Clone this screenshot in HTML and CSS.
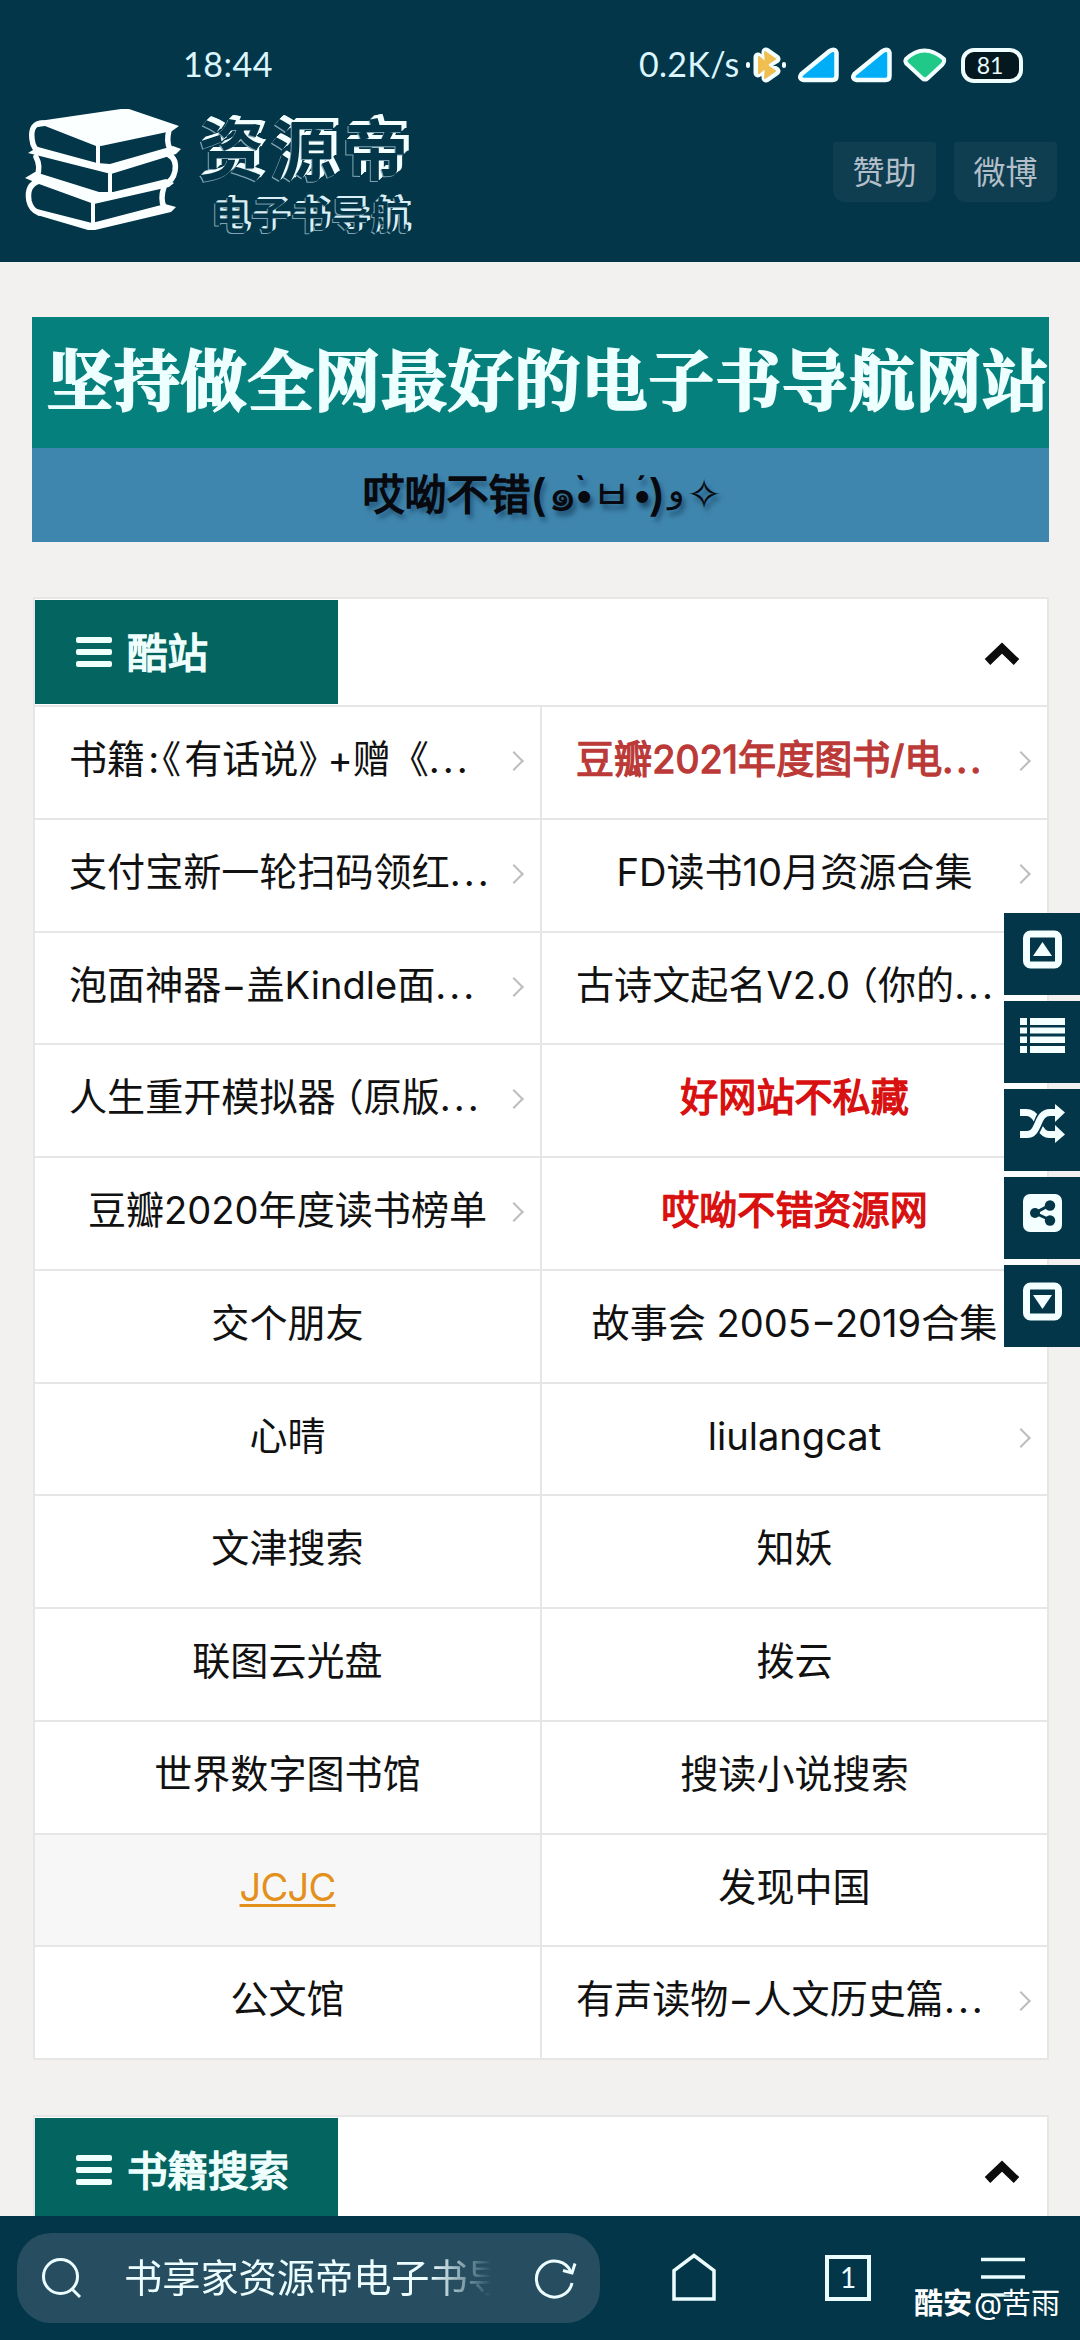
FILE: index.html
```html
<!DOCTYPE html>
<html lang="zh-CN">
<head>
<meta charset="utf-8">
<title>资源帝</title>
<link rel="stylesheet" href="styles.css">
</head>
<body>
<div class="screen">
  <header class="top">
    <div class="status">
      <span class="clock">18:44</span>
      <span class="speed">0.2K/s</span>
      <svg class="s-bt" viewBox="0 0 40 36" width="40" height="36"><g stroke="#f2feff" stroke-width="9" stroke-linejoin="round" stroke-linecap="round"><path d="M12 10l9 8-9 8z M20 5l10 7-10 6z M20 18l10 6-10 7z" fill="#f2feff"/></g><g fill="#f0bf50" stroke="#f0bf50" stroke-width="2" stroke-linejoin="round"><path d="M13 10l9 8-9 8z M19 5l10 7-9 6z M19 31l10-7-9-6z"/></g><rect x="0" y="15" width="4" height="6" rx="2" fill="#f2feff"/><rect x="36" y="15" width="4" height="6" rx="2" fill="#f2feff"/></svg>
      <svg class="s-sig" viewBox="0 0 41 34" width="41" height="34"><path d="M31 3.500Q37.500-.5 38.500 5V28Q38.500 32 34.500 32H6Q0 31 3.500 26Z" fill="#00adf7" stroke="#f2feff" stroke-width="4.500" stroke-linejoin="round"/></svg>
      <svg class="s-sig2" viewBox="0 0 41 34" width="41" height="34"><path d="M31 3.500Q37.500-.5 38.500 5V28Q38.500 32 34.500 32H6Q0 31 3.500 26Z" fill="#00adf7" stroke="#f2feff" stroke-width="4.500" stroke-linejoin="round"/></svg>
      <svg class="s-wifi" viewBox="0 0 44 34" width="44" height="34"><path d="M3 11Q21 -6 41 11Q42 14 39 17L25 30Q22 33 19 30L5 17Q1 14 3 11Z" fill="#20c987" stroke="#f2feff" stroke-width="4" stroke-linejoin="round"/></svg>
      <span class="battery">81</span>
    </div>
    <div class="brand-row">
      <svg class="books" viewBox="0 0 156 122" width="156" height="122">
        <g fill="none" stroke="#fbffff" stroke-width="5.500" stroke-linejoin="round" stroke-linecap="round">
          <path d="M18 14Q5 14 7 30Q8 40 15 43" /><path d="M144 21Q141 33 145 40"/>
          <path d="M11 48Q16 57 12 68"/><path d="M144 46Q152 50 150 62Q148 72 140 75"/>
          <path d="M14 72Q1 76 4 92Q6 101 14 104"/><path d="M139 78Q135 90 139 98"/>
          <path d="M73 36V54M85 65V84M68 94V117" stroke-width="4"/>
        </g>
        <g fill="#fbffff">
          <path d="M14 12L96 0H104L154 17L147 22L76 37H71L20 17L12 18Z"/>
          <path d="M3 44L13 38L72 54L85 55L148 37L156 40L151 45L86 65Z"/>
          <path d="M0 69L10 63L74 83L88 83L141 70L149 74L144 78L69 95L14 75Z"/>
          <path d="M8 99L67 114L140 95L151 98L146 103L70 121H63L12 106Z"/>
        </g>
      </svg>
      <div class="brand">
        <span class="brand-name">资源帝</span>
        <span class="brand-sub">电子书导航</span>
      </div>
      <nav class="links"><a>赞助</a><a>微博</a></nav>
    </div>
  </header>

  <main class="page">
    <section class="banner">
      <div class="banner-title">坚持做全网最好的电子书导航网站</div>
      <div class="banner-sub"><b class="lead">哎呦不错(</b><i class="thai">๑</i><i class="dot grave">•</i><i class="mouth">ㅂ</i><i class="dot acute">•</i><b class="close">)</b><i class="waw">و</i><i class="star">✧</i></div>
    </section>

    <section class="card">
      <div class="card-head">
        <h2 class="tab"><svg viewBox="0 0 36 30" width="36" height="30"><path d="M2 0h32a2 2 0 0 1 2 2v2a2 2 0 0 1-2 2H2a2 2 0 0 1-2-2V2a2 2 0 0 1 2-2zM2 12h32a2 2 0 0 1 2 2v2a2 2 0 0 1-2 2H2a2 2 0 0 1-2-2v-2a2 2 0 0 1 2-2zM2 24h32a2 2 0 0 1 2 2v2a2 2 0 0 1-2 2H2a2 2 0 0 1-2-2v-2a2 2 0 0 1 2-2z" fill="#effffd"/></svg><span>酷站</span></h2>
        <svg class="up" viewBox="0 0 36 24" width="36" height="24"><path d="M3.500 19L18 5L32.500 19" fill="none" stroke="#0c0c0c" stroke-width="8"/></svg>
      </div>
      <div class="grid">
        <a class="cell more start"><span>书籍<span class="colon">:</span><span class="lq">《</span>有话说<span class="rq">》</span>+赠《<em>...</em></span></a>
        <a class="cell more start crimson"><span>豆瓣2021年度图书/电<em>...</em></span></a>
        <a class="cell more start"><span>支付宝新一轮扫码领红<em>...</em></span></a>
        <a class="cell more"><span>FD读书10月资源合集</span></a>
        <a class="cell more start"><span>泡面神器−盖Kindle面<em>...</em></span></a>
        <a class="cell start"><span>古诗文起名V2.0<span class="paren">（</span>你的<em>...</em></span></a>
        <a class="cell more start"><span>人生重开模拟器<span class="paren">（</span>原版<em>...</em></span></a>
        <a class="cell red"><span>好网站不私藏</span></a>
        <a class="cell more"><span>豆瓣2020年度读书榜单</span></a>
        <a class="cell red"><span>哎呦不错资源网</span></a>
        <a class="cell"><span>交个朋友</span></a>
        <a class="cell"><span>故事会 2005−2019合集</span></a>
        <a class="cell"><span>心晴</span></a>
        <a class="cell more"><span>liulangcat</span></a>
        <a class="cell"><span>文津搜索</span></a>
        <a class="cell"><span>知妖</span></a>
        <a class="cell"><span>联图云光盘</span></a>
        <a class="cell"><span>拨云</span></a>
        <a class="cell"><span>世界数字图书馆</span></a>
        <a class="cell"><span>搜读小说搜索</span></a>
        <a class="cell active"><span>JCJC</span></a>
        <a class="cell"><span>发现中国</span></a>
        <a class="cell"><span>公文馆</span></a>
        <a class="cell more start"><span>有声读物−人文历史篇<em>...</em></span></a>
      </div>
    </section>

    <section class="card">
      <div class="card-head">
        <h2 class="tab"><svg viewBox="0 0 36 30" width="36" height="30"><path d="M2 0h32a2 2 0 0 1 2 2v2a2 2 0 0 1-2 2H2a2 2 0 0 1-2-2V2a2 2 0 0 1 2-2zM2 12h32a2 2 0 0 1 2 2v2a2 2 0 0 1-2 2H2a2 2 0 0 1-2-2v-2a2 2 0 0 1 2-2zM2 24h32a2 2 0 0 1 2 2v2a2 2 0 0 1-2 2H2a2 2 0 0 1-2-2v-2a2 2 0 0 1 2-2z" fill="#effffd"/></svg><span>书籍搜索</span></h2>
        <svg class="up" viewBox="0 0 36 24" width="36" height="24"><path d="M3.500 19L18 5L32.500 19" fill="none" stroke="#0c0c0c" stroke-width="8"/></svg>
      </div>
    </section>
  </main>

  <aside class="side">
    <a><svg viewBox="0 0 46 40" width="46" height="40"><rect x="6.500" y="4" width="32" height="31" rx="4" fill="none" stroke="#f4ffff" stroke-width="7"/><path d="M22.500 12L32 26H13Z" fill="#f4ffff"/></svg></a>
    <a><svg viewBox="0 0 46 40" width="46" height="40"><path d="M0 0h7v7H0zM10 0h35v7H10zM0 9.500h7v6H0zM10 9.500h35v6H10zM0 18.500h7v6.500H0zM10 18.500h35v6.500H10zM0 28h7v7H0zM10 28h35v7H10z" fill="#f4ffff"/></svg></a>
    <a><svg viewBox="0 0 46 40" width="46" height="40"><g fill="none" stroke="#f4ffff" stroke-width="7"><path d="M0 6.500H6Q13 6.500 17 14M20 22Q24 28.500 29 28.500H36"/></g><path d="M8 28.500C20 28.500 17 6.500 28 6.500" fill="none" stroke="#023648" stroke-width="10"/><path d="M0 28.500H7C20 28.500 16 6.500 30 6.500H36" fill="none" stroke="#f4ffff" stroke-width="7"/><path d="M35 -2L45 6.500L35 16ZM35 19L45 28.500L35 37Z" fill="#f4ffff"/></svg></a>
    <a><svg viewBox="0 0 46 40" width="46" height="40"><rect x="3" y="0" width="39" height="38" rx="7" fill="#f4ffff"/><path d="M30 11L15 19L30 26" fill="none" stroke="#023648" stroke-width="3"/><g fill="#023648"><circle cx="15" cy="19" r="5"/><circle cx="30" cy="11.500" r="5.200"/><circle cx="30" cy="26.500" r="5.200"/></g></svg></a>
    <a><svg viewBox="0 0 46 40" width="46" height="40"><rect x="6.500" y="4" width="32" height="31" rx="4" fill="none" stroke="#f4ffff" stroke-width="7"/><path d="M22.500 27L32 13H13Z" fill="#f4ffff"/></svg></a>
  </aside>

  <footer class="bar">
    <div class="search">
      <svg viewBox="0 0 40 40" width="40" height="40"><g fill="none" stroke="#ecfdff" stroke-width="3"><circle cx="18.500" cy="18.500" r="17"/><path d="M30 31L38 39"/></g></svg>
      <span class="query">书享家资源帝电子书导</span>
      <svg class="reload" viewBox="0 0 42 42" width="42" height="42"><g fill="none" stroke="#ecfdff" stroke-width="3"><path d="M37 26A18 18 0 1 1 36 15"/><path d="M28 13.500L37 16L40 6.500"/></g></svg>
    </div>
    <svg class="home" viewBox="0 0 44 48" width="44" height="48"><path d="M2 46V17.500L22 2.500L42 17.500V46Z" fill="none" stroke="#ecfdff" stroke-width="3.500"/></svg>
    <span class="tabs">1</span>
    <svg class="menu" viewBox="0 0 44 44" width="44" height="44"><path d="M0 3.500H44M0 21H44M0 39H30" stroke="#ecfdff" stroke-width="3.500"/></svg>
    <span class="mark"><b>酷安</b>@苦雨</span>
  </footer>
</div>
</body>
</html>
```
FILE: styles.css
```css
* { box-sizing: border-box; }
body { margin: 0; background: #f2f1ef; font-family: Inter, "Noto Sans CJK SC", sans-serif; color: #111; }
i, em { font-style: normal; }
svg { display: block; flex: none; overflow: visible; }
.screen { position: relative; width: 1080px; height: 2340px; overflow: hidden; display: flex; flex-direction: column; }

.top { height: 262px; flex: none; background: #023648; }
.status { display: flex; align-items: center; height: 130px; padding-left: 183px; color: #dcf6ff; font-family: Lato, sans-serif; font-size: 34px; }
.clock { width: 456px; letter-spacing: .5px; line-height: 40px; margin-top: -3px; }
.speed { width: 107px; letter-spacing: .3px; line-height: 40px; margin-top: -3px; }
.s-sig { margin-left: 12px; }
.s-sig2 { margin-left: 12px; }
.s-wifi { margin-left: 11px; }
.battery { width: 62px; height: 35px; margin-left: 14px; border: 4px solid #effeff; border-radius: 13px; background: #04191f; color: #e9fbff; font-size: 23px; line-height: 27px; text-align: center; padding-right: 4px; }
.brand-row { display: flex; height: 132px; padding: 0 23px 0 25px; align-items: flex-start; }
.books { margin: -21px 0 0; }
.brand { display: flex; flex-direction: column; margin: -15px 0 0 17px; width: 222px; color: #023648; font-weight: 700; }
.brand-name { height: 78px; font-size: 66px; line-height: 72px; letter-spacing: 6px; white-space: nowrap; text-shadow: -1px 1px 0 #7fa3b2, 1px -1px 0 #f4ffff, 2px -2px 0 #f4ffff, 3px -3px 0 #f4ffff, 4px -4px 0 #f4ffff, 5px -4px 0 #f4ffff; }
.brand-sub { font-size: 38px; line-height: 44px; letter-spacing: 2px; padding-left: 13px; white-space: nowrap; text-shadow: -1px 1px 0 #7fa3b2, 1px -1px 0 #d9eef5, 2px -2px 0 #d9eef5, 3px -2px 0 #d9eef5; }
.links { display: flex; gap: 18px; margin: 12px 0 0 auto; }
.links a { width: 103px; height: 60px; border-radius: 2px 2px 12px 12px; background: #0e3e50; color: #b3bec9; font-size: 32px; line-height: 61px; text-align: center; }

.page { padding: 55px 31px 0 32px; }
.banner { height: 225px; margin-bottom: 55px; }
.banner-title { height: 131px; padding-left: 15px; overflow: hidden; white-space: nowrap; background: #06807c; color: #edffff; font-family: "Noto Serif CJK SC", "Liberation Serif", "Noto Sans CJK SC", serif; font-weight: 700; font-size: 66px; letter-spacing: .8px; line-height: 120px; -webkit-text-stroke: 2px #edffff; }
.banner-sub { display: flex; height: 94px; justify-content: center; background: #3f86ae; color: #08090f; font-size: 42px; line-height: 93px; text-shadow: 3px 5px 5px rgba(10, 40, 70, .6); white-space: nowrap; }
.banner-sub b { font-weight: 400; -webkit-text-stroke: 1.600px #08090f; }
.banner-sub i { position: relative; text-align: center; }
.lead { width: 185px; }
.banner-sub .thai { width: 26px; font-size: 46px; }
.banner-sub .dot { width: 18px; font-size: 38px; }
.banner-sub .mouth { width: 40px; font-size: 42px; }
.close { width: 15px; }
.banner-sub .waw { width: 22px; font-size: 34px; line-height: 84px; }
.banner-sub .star { width: 32px; font-family: "DejaVu Sans", sans-serif; font-size: 42px; }
.grave::before, .acute::before { position: absolute; top: -6px; font-size: 32px; font-weight: 700; }
.grave::before { content: "`"; left: 1px; }
.acute::before { content: "´"; left: 4px; }

.card { margin: 0 0 55px 1px; width: 1016px; border: 2px solid #e6e6e6; background: #fff; }
.card-head { display: flex; align-items: flex-start; justify-content: space-between; height: 106px; padding: 1px 27px 0 0; }
.tab { display: flex; align-items: center; gap: 15px; width: 303px; height: 104px; margin: 0; padding: 0 0 0 41px; background: #046560; color: #effffd; font-size: 40.500px; font-weight: 400; }
.tab span { margin-top: -4px; -webkit-text-stroke: 1.600px #effffd; }
.up { margin-top: 43px; }
.grid { display: grid; grid-template-columns: 507px 505px; grid-auto-rows: 112.780px; }
.cell { position: relative; display: flex; justify-content: center; padding: 0 34px; border-top: 2px solid #e6e6e6; font-size: 38.100px; line-height: 105px; white-space: nowrap; }
.cell:nth-child(odd) { border-right: 2px solid #e6e6e6; }
.start { justify-content: flex-start; }
.cell em { letter-spacing: 3px; }
.colon { display: inline-block; width: 17px; text-align: center; }
.lq, .rq, .paren { font-feature-settings: "halt"; }
.lq { padding-right: 3px; }
.rq { padding-right: 10px; }
.paren { padding-left: 9px; }
.crimson { color: #bb3a38; -webkit-text-stroke: 1.300px #bb3a38; }
.red { color: #d8100f; -webkit-text-stroke: 1.400px #d8100f; }
.active { background: #f7f7f7; color: #e3901c; letter-spacing: -.8px; text-decoration: underline; text-decoration-thickness: 3px; text-underline-offset: 3px; }
.more::after { content: ""; position: absolute; right: 19px; top: 47px; width: 12px; height: 12px; border: solid #bdbdbd; border-width: 2px 2px 0 0; transform: rotate(45deg); }

.side { position: absolute; right: 0; top: 913px; display: flex; flex-direction: column; gap: 6px; }
.side a { width: 76px; height: 82px; padding: 17px 0 0 16px; background: #023648; }

.bar { position: absolute; left: 0; right: 0; bottom: 0; height: 124px; display: flex; align-items: center; background: #023648; padding: 0 0 0 17px; }
.search { display: flex; align-items: center; width: 583px; height: 90px; padding: 0 23px 0 25px; border-radius: 34px; background: #264e60; }
.query { width: 376px; margin: -6px 36px 0 42px; overflow: hidden; white-space: nowrap; color: #ecfdff; font-size: 38.200px; -webkit-mask-image: linear-gradient(90deg, #000 82%, transparent 98%); mask-image: linear-gradient(90deg, #000 82%, transparent 98%); }
.home { margin-left: 72px; margin-top: -2px; }
.tabs { width: 46px; height: 46px; margin-left: 109px; border: 4px solid #ecfdff; color: #ecfdff; font-family: Lato, sans-serif; font-size: 28px; line-height: 37px; text-align: center; }
.menu { margin-left: 110px; }
.mark { position: absolute; right: 20px; bottom: 16px; color: #fff; font-size: 29px; line-height: 40px; text-shadow: 1px 1px 2px #023648; }
.mark b { font-weight: 700; margin-right: 2px; }
```
